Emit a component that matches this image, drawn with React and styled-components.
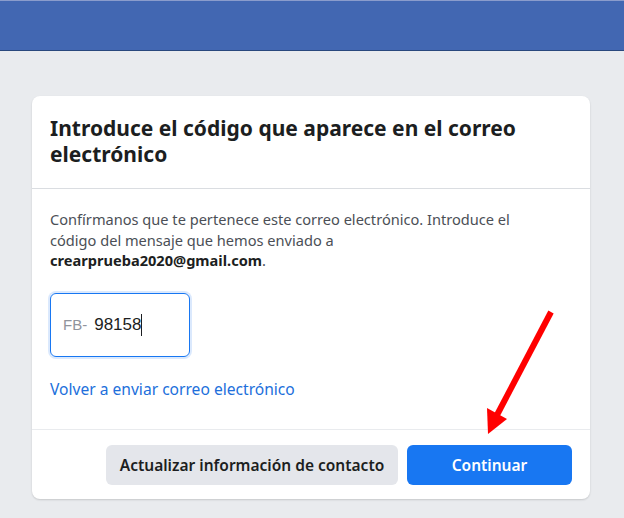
import React from 'react'
import styled, { createGlobalStyle } from 'styled-components'

const GlobalStyle = createGlobalStyle`
  html, body {
    margin: 0;
    padding: 0;
    background: #e9ebee;
    font-family: 'Noto Sans', 'Liberation Sans', Arial, sans-serif;
  }
`

const Page = styled.div`
  position: relative;
  width: 624px;
  height: 518px;
  overflow: hidden;
  background: #e9ebee;
`

const TopBar = styled.header`
  height: 49px;
  background: #4267b2;
  border-top: 1px solid #8a9ccc;
  border-bottom: 1px solid #29487d;
`

const Content = styled.main`
  padding: 45px 34px 0 32px;
`

const Card = styled.section`
  background: #fff;
  border-radius: 8px;
  box-shadow: 0 1px 2px rgba(0, 0, 0, 0.15);
`

const CardHead = styled.div`
  padding: 19px 18px 21px 18px;
  border-bottom: 1px solid #dadde1;
`

const Title = styled.h2`
  margin: 0;
  font-size: 21px;
  line-height: 26px;
  font-weight: 700;
  color: #1c1e21;
`

const CardBody = styled.div`
  padding: 20px 18px 30px 18px;
  border-bottom: 1px solid #e9ebee;
`

const Text = styled.p`
  margin: 0;
  max-width: 470px;
  font-size: 14.6px;
  line-height: 20.5px;
  color: #4b4f56;
  & b {
    color: #1c1e21;
    font-weight: 700;
  }
`

const CodeBox = styled.label`
  display: flex;
  align-items: center;
  box-sizing: border-box;
  width: 140px;
  height: 64px;
  margin-top: 22px;
  padding: 0 12px;
  border: 1px solid #1877f2;
  border-radius: 6px;
  box-shadow: 0 0 0 2px #dbe9fd;
`

const Prefix = styled.span`
  font-family: 'Liberation Sans', Arial, sans-serif;
  font-size: 15px;
  color: #90949c;
  margin-right: 7px;
`

const CodeInput = styled.span`
  font-family: 'Liberation Sans', Arial, sans-serif;
  font-size: 17px;
  color: #1c1e21;
  border-right: 1px solid #1c1e21;
  line-height: 22px;
`

const Link = styled.a`
  display: block;
  margin-top: 22px;
  font-size: 15.6px;
  line-height: 20px;
  color: #216fdb;
  text-decoration: none;
`

const Footer = styled.div`
  display: flex;
  justify-content: flex-end;
  gap: 9px;
  padding: 15px 18px 14px;
`

const Button = styled.button`
  height: 40px;
  padding: 0;
  border: none;
  border-radius: 6px;
  font-family: 'Noto Sans', 'Liberation Sans', Arial, sans-serif;
  font-size: 15.5px;
  font-weight: 600;
  white-space: nowrap;
  width: ${p => p.$w}px;
  background: ${p => (p.$primary ? '#1877f2' : '#e4e6eb')};
  color: ${p => (p.$primary ? '#fff' : '#1c1e21')};
`

const Arrow = styled.svg`
  position: absolute;
  left: 0;
  top: 0;
  pointer-events: none;
`

export default function App() {
  return (
    <Page>
      <GlobalStyle />
      <TopBar />
      <Content>
        <Card>
          <CardHead>
            <Title>Introduce el código que aparece en el correo electrónico</Title>
          </CardHead>
          <CardBody>
            <Text>
              Confírmanos que te pertenece este correo electrónico. Introduce el código del mensaje que
              hemos enviado a<br />
              <b>crearprueba2020@gmail.com</b>.
            </Text>
            <CodeBox>
              <Prefix>FB-</Prefix>
              <CodeInput>98158</CodeInput>
            </CodeBox>
            <Link href="#">Volver a enviar correo electrónico</Link>
          </CardBody>
          <Footer>
            <Button $w={292}>Actualizar información de contacto</Button>
            <Button $primary $w={165}>Continuar</Button>
          </Footer>
        </Card>
      </Content>
      <Arrow width="624" height="518" viewBox="0 0 624 518">
        <line x1="551" y1="312" x2="497" y2="415" stroke="#ff0000" strokeWidth="6" />
        <polygon points="488,434 487,408 507,419" fill="#ff0000" />
      </Arrow>
    </Page>
  )
}
